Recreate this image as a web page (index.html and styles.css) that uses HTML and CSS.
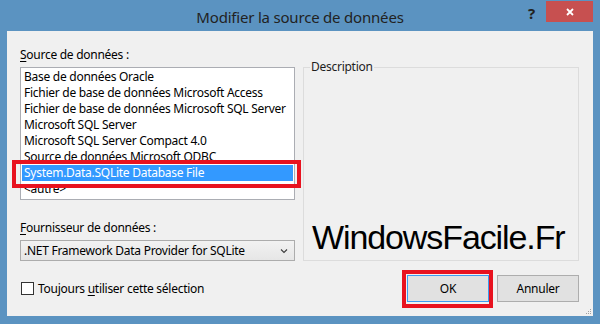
FILE: index.html
```html
<!DOCTYPE html>
<html lang="fr">
  <head>
    <title>Modifier la source de données</title>
    <meta charset="utf-8" />
    <meta name="viewport" content="width=device-width initial-scale=1" />
    <link rel="stylesheet" href="styles.css">
  </head>

  <body>
    <div class="window">
      <header class="titlebar">
        <span class="title">Modifier la source de données</span>
        <div class="controls">
          <span class="help">?</span>
          <button class="close" aria-label="Fermer">
            <svg width="8" height="8" viewBox="0 0 8 8">
              <path d="M1 1 L7 7 M7 1 L1 7" stroke="#fff" stroke-width="1.8" fill="none" />
            </svg>
          </button>
        </div>
      </header>

      <main class="client">
        <div class="panes">
          <div class="pane pane--left">
            <label class="caption"><u>S</u>ource de données :</label>
            <ul class="listbox">
              <li class="listbox__item">Base de données Oracle</li>
              <li class="listbox__item">Fichier de base de données Microsoft Access</li>
              <li class="listbox__item">Fichier de base de données Microsoft SQL Server</li>
              <li class="listbox__item">Microsoft SQL Server</li>
              <li class="listbox__item">Microsoft SQL Server Compact 4.0</li>
              <li class="listbox__item">Source de données Microsoft ODBC</li>
              <li class="listbox__item listbox__item--selected">
                System.Data.SQLite Database File
                <span class="mark mark--list"></span>
              </li>
              <li class="listbox__item">&lt;autre&gt;</li>
            </ul>

            <label class="caption caption--provider"><u>F</u>ournisseur de données :</label>
            <div class="combo">
              <span>.NET Framework Data Provider for SQLite</span>
              <svg width="8" height="6" viewBox="0 0 8 6">
                <path d="M1 1.5 L4 4.5 L7 1.5" stroke="#3c3c3c" stroke-width="1.1" fill="none" />
              </svg>
            </div>
          </div>

          <fieldset class="group">
            <legend>Description</legend>
            <div class="watermark">WindowsFacile.Fr</div>
          </fieldset>
        </div>

        <footer class="footer">
          <label class="check">
            <span class="check__box"></span>
            <span>Toujours <u>u</u>tiliser cette sélection</span>
          </label>
          <div class="buttons">
            <button class="btn btn--default">
              OK
              <span class="mark mark--button"></span>
            </button>
            <button class="btn">Annuler</button>
          </div>
        </footer>

        <svg class="grip" width="6" height="6" viewBox="0 0 6 6">
          <rect x="4" y="0" width="1" height="1" fill="#a0a0a0" />
          <rect x="2" y="2" width="1" height="1" fill="#a0a0a0" />
          <rect x="4" y="2" width="1" height="1" fill="#a0a0a0" />
          <rect x="0" y="4" width="1" height="1" fill="#a0a0a0" />
          <rect x="2" y="4" width="1" height="1" fill="#a0a0a0" />
          <rect x="4" y="4" width="1" height="1" fill="#a0a0a0" />
        </svg>
      </main>
    </div>
  </body>
</html>
```

FILE: styles.css
```css
* {
  box-sizing: border-box;
}

html,
body {
  margin: 0;
  padding: 0;

  width: 100%;
  height: 100%;
}

body {
  background-color: #5b93c1;
  font-family: "Noto Sans", "Open Sans", sans-serif;
  font-size: 12px;
  letter-spacing: -0.27px;
  color: #000;
}

button {
  all: unset;
}

u {
  text-decoration-thickness: 1px;
  text-underline-offset: 2px;
}

.window {
  width: 600px;
  height: 324px;
  padding: 0 7px;
}

/* title bar */

.titlebar {
  display: grid;
  grid-template-columns: 1fr auto 1fr;
  height: 31px;
}

.title {
  grid-column: 2;
  padding-top: 7px;

  font-size: 15px;
  letter-spacing: -0.2px;
  line-height: 20px;
  color: #222;
}

.controls {
  grid-column: 3;
  justify-self: end;
  display: flex;
  align-items: flex-start;
  margin-top: 1px;
}

.help {
  width: 18px;
  padding-top: 4px;

  font-size: 15px;
  font-weight: bold;
  line-height: 16px;
  color: #222;
}

.close {
  display: flex;
  align-items: center;
  justify-content: center;
  width: 47px;
  height: 21px;

  background-color: #c75050;
}

/* client area */

.client {
  position: relative;
  height: 285px;
  padding: 16px 14px 0 13px;

  background-color: #f0f0f0;
}

.panes {
  display: flex;
  gap: 8px;
}

.pane--left {
  display: flex;
  flex-direction: column;
  width: 275px;
}

.caption {
  display: block;
  margin-bottom: 4px;
  line-height: 16px;
}

.caption--provider {
  margin-top: 20px;
}

ul {
  list-style-type: none;
}

.listbox {
  height: 133px;
  margin: 0;
  padding: 1px 0 0;

  background-color: #fff;
  border: 1px solid #abadb3;
}

.listbox__item {
  position: relative;
  margin: 0 1px;
  padding-left: 2px;

  line-height: 16px;
  white-space: nowrap;
}

.listbox__item--selected {
  background-color: #3399ff;
  color: #fff;
}

.combo {
  display: flex;
  align-items: center;
  justify-content: space-between;
  height: 21px;
  padding: 0 6px 0 3px;

  background: linear-gradient(#f2f2f2, #e6e6e6);
  border: 1px solid #acacac;
}

/* red annotation frames */

.mark {
  position: absolute;
  z-index: 1;

  border: 4px solid #e8121f;
  pointer-events: none;
}

.mark--list {
  top: -5px;
  left: -10px;
  width: 289px;
  height: 28px;
}

.mark--button {
  top: -6px;
  left: -6px;
  width: 91px;
  height: 38px;
}

/* description group */

.group {
  display: flex;
  flex-direction: column;
  justify-content: flex-end;
  width: 276px;
  height: 202px;
  min-width: 0;
  margin: 12px 0 0;
  padding: 0 6px 4px;

  border: 1px solid #dcdcdc;
}

.group legend {
  padding: 0 1px;
  line-height: 16px;
  color: #1e1e1e;
}

.watermark {
  margin-left: 2px;

  font-family: "Liberation Sans", Arial, sans-serif;
  font-size: 34px;
  letter-spacing: -1.1px;
  line-height: 38px;
  color: #000;
}

/* footer */

.footer {
  display: flex;
  align-items: center;
  justify-content: space-between;
  margin-top: 14px;
}

.check {
  display: flex;
  align-items: center;
  gap: 4px;
  margin-left: 1px;
}

.check__box {
  width: 13px;
  height: 13px;

  background-color: #fff;
  border: 1px solid #333;
}

.buttons {
  display: flex;
  gap: 8px;
}

.btn {
  position: relative;
  width: 80px;
  height: 25px;

  text-align: center;
  line-height: 23px;

  background-color: #e1e1e1;
  border: 1px solid #adadad;
}

.btn--default {
  border-color: #3c9bf0;
}

.grip {
  position: absolute;
  right: 1px;
  bottom: 1px;
}
```
